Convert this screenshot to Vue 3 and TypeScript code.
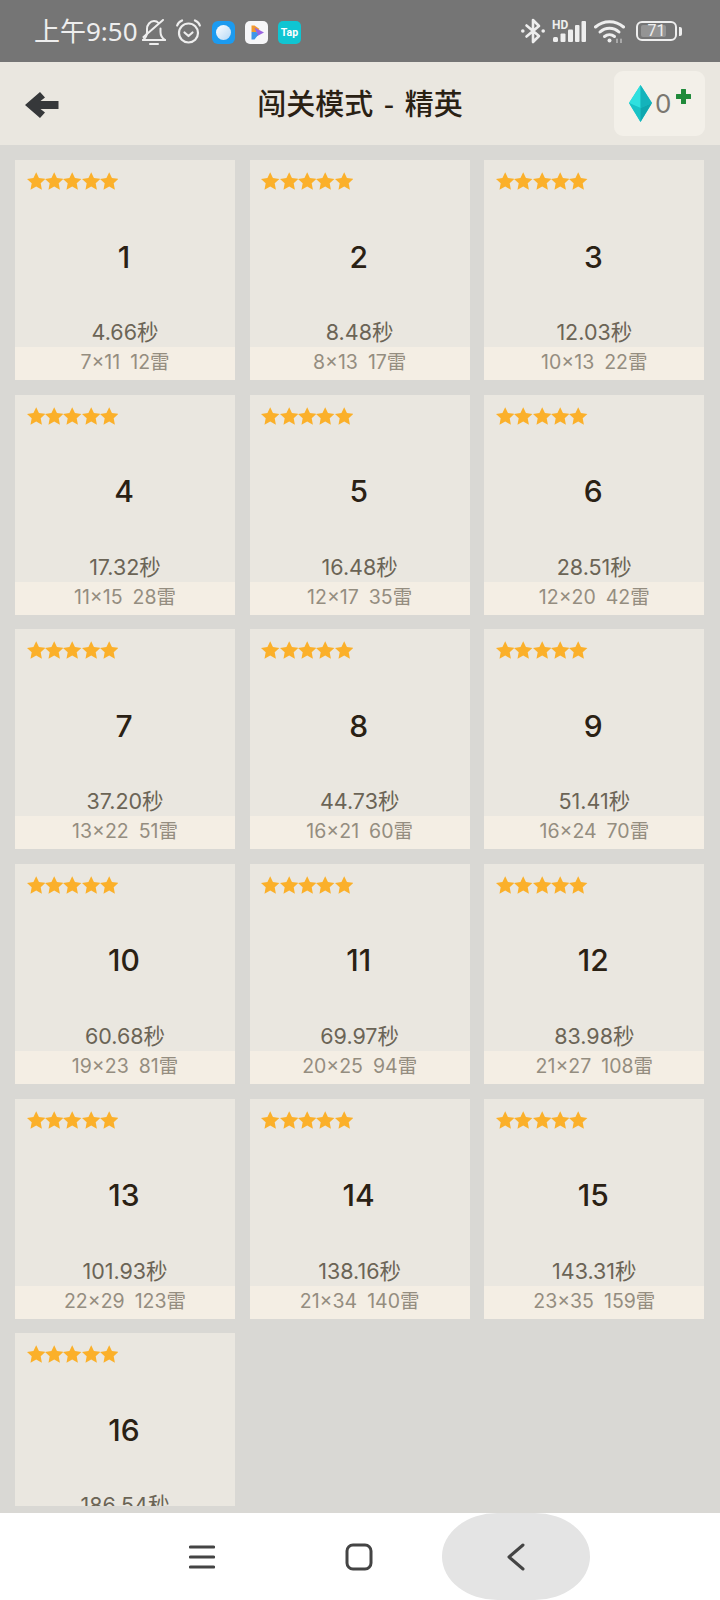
<script setup lang="ts">
interface Level {
  id: number
  time: string
  size: string
  mines: number
}

const levels: Level[] = [
  { id: 1, time: '4.66', size: '7×11', mines: 12 },
  { id: 2, time: '8.48', size: '8×13', mines: 17 },
  { id: 3, time: '12.03', size: '10×13', mines: 22 },
  { id: 4, time: '17.32', size: '11×15', mines: 28 },
  { id: 5, time: '16.48', size: '12×17', mines: 35 },
  { id: 6, time: '28.51', size: '12×20', mines: 42 },
  { id: 7, time: '37.20', size: '13×22', mines: 51 },
  { id: 8, time: '44.73', size: '16×21', mines: 60 },
  { id: 9, time: '51.41', size: '16×24', mines: 70 },
  { id: 10, time: '60.68', size: '19×23', mines: 81 },
  { id: 11, time: '69.97', size: '20×25', mines: 94 },
  { id: 12, time: '83.98', size: '21×27', mines: 108 },
  { id: 13, time: '101.93', size: '22×29', mines: 123 },
  { id: 14, time: '138.16', size: '21×34', mines: 140 },
  { id: 15, time: '143.31', size: '23×35', mines: 159 },
  { id: 16, time: '186.54', size: '25×36', mines: 180 },
]
</script>

<template>
  <div class="screen">
    <div class="status">
      <div class="status-left">
        <span class="clock">上午9:50</span>
        <svg class="bell" width="24" height="27" viewBox="0 0 24 27" fill="none" stroke="#eee" stroke-width="2" stroke-linecap="round" stroke-linejoin="round">
          <path d="M1 21h22" />
          <path d="M1 21c2.500-2 4-4.500 4-8v-3c0-4 3-8 7-8 2 0 3.500.7 4.500 2" />
          <path d="M18.500 9.500V13c0 4 1.500 6 4.500 8" />
          <path d="M1.500 18 21 1" />
          <path d="M8 25h8" />
        </svg>
        <svg class="alarm" width="25" height="25" viewBox="0 0 25 25" fill="none" stroke="#eee" stroke-width="2.200" stroke-linecap="round" stroke-linejoin="round">
          <circle cx="12.500" cy="14" r="9.500" />
          <path d="M8.500 13.500l4 3.500 4-3.500" />
          <path d="M1.200 6.500C2 4 3.500 2.500 6 1.500M23.800 6.500C23 4 21.500 2.500 19 1.500" />
        </svg>
        <svg class="app first" width="23" height="23" viewBox="0 0 23 23">
          <defs>
            <linearGradient id="orb" x1="0" y1="0" x2="1" y2="1">
              <stop offset="0" stop-color="#ffffff" />
              <stop offset="1" stop-color="#b4d8f6" />
            </linearGradient>
          </defs>
          <rect width="23" height="23" rx="6" fill="#1c9bf0" />
          <circle cx="11.500" cy="11.500" r="7.500" fill="url(#orb)" />
        </svg>
        <svg class="app" width="23" height="23" viewBox="0 0 23 23">
          <rect width="23" height="23" rx="5" fill="#f6f6f8" />
          <path d="M6.500 4.500h3l5 3.500-3 3H6.500z" fill="#f2992e" />
          <path d="M9.500 6.500 19 11.500l-9.500 5 2-5z" fill="#9a63e0" />
          <path d="M6.500 11h5l1.500 3-3.500 4.500h-3z" fill="#3f96e8" />
        </svg>
        <div class="tap">Tap</div>
      </div>
      <div class="status-right">
        <svg width="24" height="26" viewBox="0 0 24 26" fill="none" stroke="#eee" stroke-width="2.600" stroke-linejoin="round" stroke-linecap="round">
          <path d="M5.500 7.500 18 18l-6 6V2l6 6L5.500 18.500" />
          <circle cx="1.800" cy="13" r="1.800" fill="#eee" stroke="none" />
          <circle cx="22.200" cy="13" r="1.800" fill="#eee" stroke="none" />
        </svg>
        <svg class="signal" width="34" height="24" viewBox="0 0 34 24">
          <text x="0" y="10" font-size="12" font-weight="700" fill="#eee" font-family="Roboto, sans-serif">HD</text>
          <rect x="1" y="18" width="5" height="5" rx="1.500" fill="#eee" />
          <rect x="8.500" y="14.500" width="5" height="8.500" rx="1" fill="#eee" />
          <rect x="16" y="10.500" width="5" height="12.500" rx="1" fill="#eee" />
          <rect x="23" y="6" width="4.500" height="17" rx="1" fill="#eee" />
          <rect x="29.500" y="2" width="4.500" height="21" rx="1" fill="#eee" />
        </svg>
        <svg class="wifi" width="31" height="24" viewBox="0 0 31 24" fill="none" stroke="#eee" stroke-width="3" stroke-linecap="round">
          <path d="M1.500 8C9.500 1 21.500 1 29.500 8" />
          <path d="M6 13c5.500-5 13.500-5 19 0" />
          <path d="M10.500 17.500c3-2.500 7-2.500 10 0" />
          <circle cx="15.500" cy="21.500" r="2" fill="#eee" stroke="none" />
          <path d="M23 24v-4M27 20v4" stroke-width="1.200" stroke="#ccc" />
        </svg>
        <div class="battery">
          <div class="battery-body">
            <div class="battery-fill"></div>
            <span>71</span>
          </div>
          <div class="battery-nub"></div>
        </div>
      </div>
    </div>

    <div class="header">
      <svg class="back" width="34" height="26" viewBox="0 0 34 26">
        <path d="M15 0 0 13l15 13 5-5.500-4.500-3.500H33.500V9H15.500L20 5.500z" fill="#36383a" />
      </svg>
      <div class="title">闯关模式 - 精英</div>
      <div class="gems">
        <svg width="23" height="37" viewBox="0 0 23 37">
          <path d="M11.500 0 0 18l11.500 19L23 18z" fill="#1fd0d2" />
          <path d="M11.500 0 0 18l11.500 5z" fill="#2fe0df" />
          <path d="M11.500 0 23 18l-11.500 5z" fill="#14b3bb" />
          <path d="M0 18l11.500 19V23z" fill="#18c2c6" />
          <path d="M23 18 11.500 37V23z" fill="#0fa6ae" />
        </svg>
        <span class="gem-count">0</span>
        <svg class="plus" width="15" height="15" viewBox="0 0 15 15">
          <path d="M5 .5Q5 0 5.500 0h4q.5 0 .5.500V5h4.500q.5 0 .5.500v4q0 .5-.5.500H10v4.500q0 .5-.5.500h-4q-.5 0-.5-.5V10H.5Q0 10 0 9.500v-4Q0 5 .5 5H5z" fill="#1f8a3a" />
        </svg>
      </div>
    </div>

    <div class="list">
      <div class="grid">
        <div v-for="level in levels" :key="level.id" class="card">
          <div class="stars">
            <svg v-for="n in 5" :key="n" width="18.400" height="18" viewBox="0 0 20 19">
              <path d="M10 0l3 6.300 7 .9-5.100 4.800 1.300 6.900L10 15.600l-6.200 3.300L5.100 12 0 7.200l7-.9z" fill="#fbb02a" />
            </svg>
          </div>
          <div class="num">{{ level.id }}</div>
          <div class="time">{{ level.time }}秒</div>
          <div class="info">
            <span>{{ level.size }}</span>
            <span>{{ level.mines }}雷</span>
          </div>
        </div>
      </div>
    </div>

    <div class="nav">
      <svg class="nav-menu" width="26" height="24" viewBox="0 0 26 24" fill="none" stroke="#444" stroke-width="3.200" stroke-linecap="round">
        <path d="M1.500 2h23M1.500 12h23M1.500 22h23" />
      </svg>
      <svg class="nav-home" width="28" height="28" viewBox="0 0 28 28" fill="none" stroke="#444" stroke-width="3">
        <rect x="2" y="2" width="24" height="24" rx="6" />
      </svg>
      <div class="nav-back">
        <svg width="20" height="28" viewBox="0 0 20 28" fill="none" stroke="#444" stroke-width="3" stroke-linecap="round" stroke-linejoin="round">
          <path d="M17 2 3 14l14 12" />
        </svg>
      </div>
    </div>
  </div>
</template>

<style>
html,
body {
  margin: 0;
  background: #d9d8d4;
}
</style>

<style scoped>
.screen {
  width: 720px;
  height: 1600px;
  display: flex;
  flex-direction: column;
  overflow: hidden;
  background: #d9d8d4;
  font-family: "Inter", "Noto Sans CJK SC", sans-serif;
}

.status {
  height: 62px;
  flex: none;
  background: #757575;
  display: flex;
  justify-content: space-between;
  align-items: center;
  padding: 0 38px 0 34px;
  box-sizing: border-box;
}

.status-left,
.status-right {
  display: flex;
  align-items: center;
}

.clock {
  width: 108px;
  font-size: 26px;
  color: #eee;
  font-family: "Noto Sans", "Noto Sans CJK SC", sans-serif;
  line-height: 30px;
  white-space: nowrap;
}

.bell {
  margin-top: 3px;
}

.alarm {
  margin-left: 10px;
}

.app {
  margin-left: 10px;
  margin-top: 2px;
}

.app.first {
  margin-left: 11px;
}

.tap {
  margin-left: 10px;
  margin-top: 2px;
  width: 23px;
  height: 23px;
  border-radius: 5px;
  background: #10c5d2;
  color: #fff;
  font-size: 10.500px;
  font-weight: 700;
  text-align: center;
  line-height: 23px;
  font-family: "Roboto", sans-serif;
}

.signal {
  margin-left: 7px;
}

.wifi {
  margin-left: 8px;
}

.battery {
  display: flex;
  align-items: center;
  margin-left: 11px;
}

.battery-body {
  position: relative;
  width: 41px;
  height: 20px;
  box-sizing: border-box;
  border: 2px solid #eee;
  border-radius: 6px;
  text-align: center;
  font-size: 16px;
  line-height: 16px;
  color: #eee;
  font-family: "Roboto", sans-serif;
}

.battery-body span {
  position: relative;
}

.battery-fill {
  position: absolute;
  left: 3px;
  top: 2px;
  bottom: 2px;
  width: 25px;
  background: #949494;
  border-radius: 2px;
}

.battery-nub {
  width: 3px;
  height: 9px;
  margin-left: 2px;
  background: #eee;
  border-radius: 0 2px 2px 0;
}

.header {
  height: 83px;
  flex: none;
  position: relative;
  background: #eae7e0;
  display: flex;
  align-items: center;
  justify-content: center;
}

.back {
  position: absolute;
  left: 25px;
  top: 30px;
}

.title {
  font-size: 29px;
  font-weight: 500;
  word-spacing: 4px;
  color: #2a2114;
  font-family: "Noto Sans CJK SC", sans-serif;
  margin-top: -4px;
}

.gems {
  position: absolute;
  left: 614px;
  top: 9px;
  width: 91px;
  height: 65px;
  border-radius: 9px;
  background: #f3f0e9;
  display: flex;
  align-items: center;
  padding-left: 15px;
  box-sizing: border-box;
}

.gem-count {
  margin-left: 3px;
  font-size: 26px;
  color: #7a7770;
}

.plus {
  position: absolute;
  left: 62px;
  top: 18px;
}

.list {
  flex: 1;
  min-height: 0;
  padding: 15px 15.500px 7.500px 15px;
  display: flex;
}

.grid {
  flex: 1;
  overflow: hidden;
  display: grid;
  grid-template-columns: repeat(3, 220px);
  grid-auto-rows: 220px;
  gap: 14.670px;
  align-content: start;
}

.card {
  height: 220px;
  background: #eae7e0;
  display: flex;
  flex-direction: column;
}

.stars {
  height: 34px;
  flex: none;
  display: flex;
  padding: 12px 0 0 11.500px;
  box-sizing: border-box;
}

.stars svg {
  flex: none;
}

.num {
  flex: 1;
  display: flex;
  align-items: center;
  justify-content: center;
  padding-right: 2px;
  font-size: 30px;
  font-weight: 500;
  color: #2a2114;
}

.time {
  height: 28px;
  flex: none;
  text-align: center;
  font-size: 21.500px;
  line-height: 26px;
  color: #6b6456;
}

.info {
  height: 33px;
  flex: none;
  background: #f4eee4;
  display: flex;
  justify-content: center;
  align-items: baseline;
  gap: 10px;
  font-size: 19.500px;
  line-height: 31px;
  color: #948d80;
}

.nav {
  height: 87px;
  flex: none;
  position: relative;
  background: #fff;
  display: flex;
  align-items: center;
}

.nav-menu {
  margin-left: 189px;
}

.nav-home {
  margin-left: 130px;
}

.nav-back {
  margin-left: 69px;
  width: 148px;
  height: 87px;
  background: #e4e4e4;
  border-radius: 56px / 44px;
  display: flex;
  align-items: center;
  justify-content: center;
}
</style>
